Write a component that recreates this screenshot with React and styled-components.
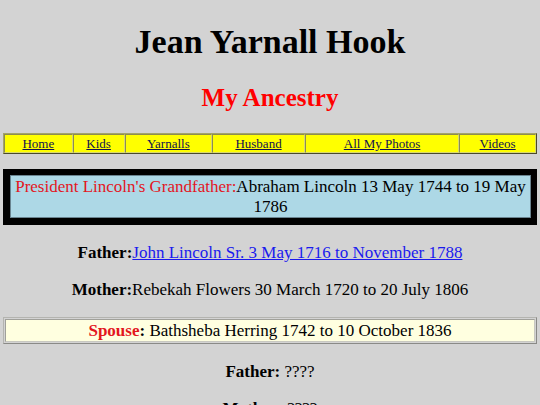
import React from 'react'
import styled, { createGlobalStyle } from 'styled-components'

const GlobalStyle = createGlobalStyle`
  html, body {
    margin: 0;
    padding: 0;
    background: #d3d3d3;
    font-family: "Liberation Serif", "Times New Roman", serif;
    color: #000;
  }
`;

const Page = styled.div`
  padding: 0 3px 40px;
  text-align: center;
`;

const Title = styled.h1`
  font-size: 34px;
  line-height: 38px;
  font-weight: bold;
  margin: 23px 0 0;
`;

const SubTitle = styled.h2`
  font-size: 25px;
  line-height: 28px;
  font-weight: bold;
  color: #ff0000;
  margin: 23px 0 0;
`;

const NavTable = styled.nav`
  margin-top: 21px;
  display: grid;
  grid-template-columns: 69fr 52fr 88fr 93fr 155fr 77fr;
  background: #ffff00;
  border: 1px solid;
  border-color: #a3a36a #4a4a2a #4a4a2a #a3a36a;
`;

const NavCell = styled.div`
  border: 1px solid;
  border-color: #8c8c50 #d8d870 #d8d870 #8c8c50;
  padding: 1px;
  font-size: 13px;
  line-height: 15px;
`;

const NavLink = styled.a`
  color: #111150;
  text-decoration: underline;
`;

const FeatureBox = styled.div`
  margin-top: 15px;
  background: #000;
  padding: 6px 6px 7px 7px;
`;

const FeatureInner = styled.div`
  background: #add8e6;
  border: 1px solid #6a8490;
  padding: 1px 1px;
  font-size: 17px;
  line-height: 19.5px;
`;

const Label = styled.span`
  color: ${(props) => props.color || '#000'};
  font-weight: ${(props) => (props.bold ? 'bold' : 'normal')};
`;

const Line = styled.p`
  font-size: 17px;
  line-height: 18px;
  margin: ${(props) => props.top || 19}px 0 0;
`;

const PersonLink = styled.a`
  color: #1a1aee;
  text-decoration: underline;
`;

const SpouseBox = styled.div`
  margin-top: 18px;
  border: 1px solid;
  border-color: #b4b4b0 #8a8a86 #8a8a86 #b4b4b0;
  padding: 1px;
`;

const SpouseInner = styled.div`
  background: #ffffe0;
  border: 1px solid;
  border-color: #a0a09a #c8c8c0 #c8c8c0 #a0a09a;
  padding: 2px 4px 1px;
  font-size: 17px;
  line-height: 18px;
`;

const navItems = [
  'Home',
  'Kids',
  'Yarnalls',
  'Husband',
  'All My Photos',
  'Videos',
];

export default function App() {
  return (
    <>
      <GlobalStyle />
      <Page>
        <Title>Jean Yarnall Hook</Title>
        <SubTitle>My Ancestry</SubTitle>
        <NavTable>
          {navItems.map((item) => (
            <NavCell key={item}>
              <NavLink href="#">{item}</NavLink>
            </NavCell>
          ))}
        </NavTable>
        <FeatureBox>
          <FeatureInner>
            <Label color="#e3161e">President Lincoln's Grandfather:</Label>
            Abraham Lincoln 13 May 1744 to 19 May 1786
          </FeatureInner>
        </FeatureBox>
        <Line top={19}>
          <Label bold>Father:</Label>
          <PersonLink href="#">John Lincoln Sr. 3 May 1716 to November 1788</PersonLink>
        </Line>
        <Line top={19}>
          <Label bold>Mother:</Label>Rebekah Flowers 30 March 1720 to 20 July 1806
        </Line>
        <SpouseBox>
          <SpouseInner>
            <Label bold color="#e3161e">Spouse</Label>
            <Label bold>:</Label> Bathsheba Herring 1742 to 10 October 1836
          </SpouseInner>
        </SpouseBox>
        <Line top={19}>
          <Label bold>Father:</Label> ????
        </Line>
        <Line top={19}>
          <Label bold>Mother:</Label> ????
        </Line>
      </Page>
    </>
  )
}
